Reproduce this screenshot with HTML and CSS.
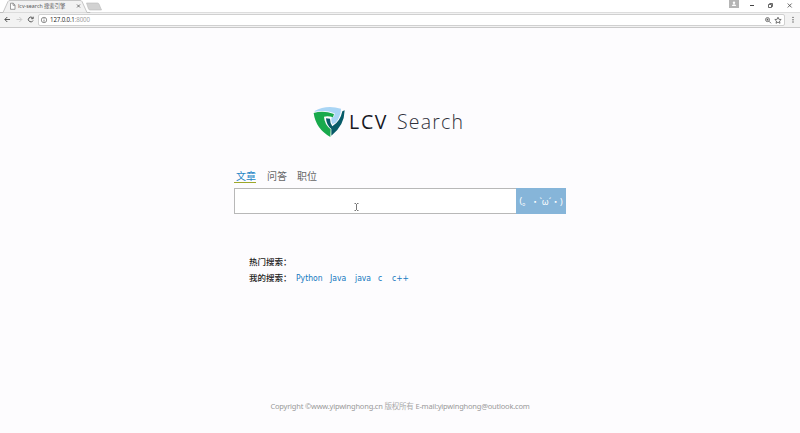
FILE: index.html
```html
<!DOCTYPE html>
<html lang="zh-CN">
<head>
<meta charset="utf-8">
<title>lcv-search 搜索引擎</title>
<link rel="stylesheet" href="styles.css">
</head>
<body>
<header class="browser">
  <div class="tabstrip">
    <svg class="tab-shape" width="105" height="13" viewBox="0 0 105 13">
      <path d="M0 12.5H3L8 1.5Q8.500 .5 10 .5H80Q81.500 .5 82 1.500L87 12.500H90V13H0Z" fill="#f2f2f2" stroke="#b9b9b9" stroke-width=".8"/>
      <path d="M86.500 3H97.500Q98.500 3 99 4L101.500 10H90Q89 10 88.500 9Z" fill="#d2d2d2" stroke="#bbb" stroke-width=".6"/>
      <path d="M10.500 3.200H13.300L15 5V9.300H10.500ZM13 3.200V5.300H15" fill="#fff" stroke="#777" stroke-width=".7"/>
      <path d="M77 4.500L80 7.500M80 4.500L77 7.500" stroke="#555" stroke-width=".8"/>
    </svg>
    <span class="tab-title">lcv-search 搜索引擎</span>
    <svg class="window-buttons" width="72" height="13" viewBox="0 0 72 13">
      <rect x="1" y="0" width="10" height="8" fill="#b5b5b5"/>
      <circle cx="6" cy="2.700" r="1.200" fill="#fff"/><path d="M3.800 6Q4 4.300 6 4.300T8.200 6Z" fill="#fff"/>
      <path d="M22 5.500H26" stroke="#444"/>
      <path d="M40.500 4.500H43.500V7.500H40.500ZM41.700 4.300V3.500H44.500V6.500H43.600" fill="none" stroke="#444" stroke-width=".8"/>
      <path d="M59.700 3.500L63.700 7.500M63.700 3.500L59.700 7.500" stroke="#444" stroke-width=".8"/>
    </svg>
  </div>
  <div class="toolbar">
    <svg width="38" height="14" viewBox="0 0 38 14" fill="none">
      <path d="M10 6.500H5M7.300 4L4.800 6.500L7.300 9" stroke="#555"/>
      <path d="M16.500 6.500H21.500M19.300 4L21.800 6.500L19.300 9" stroke="#ccc"/>
      <path d="M32.700 5A2.400 2.400 0 1 0 33 7.500M33.200 3.700V5.700H31.200" stroke="#555"/>
    </svg>
    <div class="address">
      <svg width="10" height="10" viewBox="0 0 10 10"><circle cx="5" cy="5" r="2.700" fill="none" stroke="#666" stroke-width=".7"/><path d="M5 3.200V4M5 4.600V6.800" stroke="#666" stroke-width=".8"/></svg>
      <span class="url">127.0.0.1<span class="port">:8000</span></span>
      <svg class="address-actions" width="21" height="11" viewBox="0 0 21 11" fill="none" stroke="#555" stroke-width=".8">
        <circle cx="4.500" cy="4.600" r="2"/><path d="M6 6.200L8 8.300M3.500 4.600H5.500M4.500 3.600V5.600"/>
        <path d="M15 2.200L15.900 4.300L18.200 4.500L16.500 6L17 8.300L15 7.100L13 8.300L13.500 6L11.800 4.500L14.100 4.300Z"/>
      </svg>
    </div>
    <svg width="15" height="14" viewBox="0 0 15 14" fill="#555"><circle cx="8" cy="4.400" r=".7"/><circle cx="8" cy="6.700" r=".7"/><circle cx="8" cy="9" r=".7"/></svg>
  </div>
</header>
<main>
  <h1 class="brand">
    <svg width="32" height="32" viewBox="9 9 96 96">
      <path d="M14 24Q48 5 93 17Q92 42 77 59L67 64Q62 54 65 43L72 42L74 31Q46 20 14 26Z" fill="#a9d5f5"/>
      <path d="M11 30Q40 21 72 33L69 43Q55 38 42 41Q43 63 62 79L61 102Q17 77 11 30Z" fill="#18a94c"/>
      <path d="M48 46L60 47Q60 61 67 70Q91 55 97 25L104 22Q103 69 64 98V78Q49 66 48 46Z" fill="#075b68"/>
    </svg>
    <span class="brand-lcv">LCV</span><span class="brand-search">Search</span>
  </h1>
  <section class="search">
    <nav class="types"><a class="active">文章</a><a>问答</a><a>职位</a></nav>
    <div class="search-row">
      <div class="field"></div>
      <div class="submit"><span>(</span><span class="comma">。</span><span>・`ω´・)</span></div>
    </div>
  </section>
  <section class="history">
    <div class="history-row"><b>热门搜索：</b></div>
    <div class="history-row"><b>我的搜索：</b><a class="w1">Python</a><a class="w2">Java</a><a class="w3">java</a><a class="w4">c</a><a>c++</a></div>
  </section>
</main>
<footer>Copyright ©www.yipwinghong.cn <span class="rights">版权所有</span> E-mail:yipwinghong@outlook.com</footer>
<svg class="cursor" width="5" height="8" viewBox="0 0 5 8"><path d="M.5 .5H2M3 .5H4.500M2.500 1V7M.5 7.500H2M3 7.500H4.500" fill="none" stroke="#555" stroke-width=".8"/></svg>
</body>
</html>
```
FILE: styles.css
```css
* { box-sizing: border-box; }
body {
  margin: 0;
  height: 433px;
  overflow: hidden;
  display: flex;
  flex-direction: column;
  background: #fdfcfe;
  font-family: "Noto Sans", "Noto Sans CJK SC", sans-serif;
}
svg { display: block; flex: none; }
.browser { height: 28px; flex: none; background: #f2f2f2; border-bottom: 1px solid #c9c9c9; }
.tabstrip { height: 13px; display: flex; background: #fff; border-bottom: 1px solid #ddd; }
.tab-title { width: 60px; margin-left: -87px; font-size: 5.3px; line-height: 13px; color: #555; white-space: nowrap; }
.window-buttons { margin-left: auto; }
.toolbar { height: 14px; display: flex; }
.address {
  flex: 1;
  height: 12px;
  margin-top: 1px;
  display: flex;
  align-items: center;
  background: #fff;
  border: 1px solid #d0d0d0;
  border-radius: 2px;
}
.url { margin-left: 1px; font-family: "Open Sans", sans-serif; font-size: 6.2px; letter-spacing: -.15px; line-height: 10px; color: #222; }
.port { color: #999; }
.address-actions { margin-left: auto; }
main { flex: 1; }
.brand {
  display: flex;
  height: 32px;
  margin: 78px 0 0 313px;
  font-family: "Open Sans", sans-serif;
  font-size: 19.5px;
  line-height: 32px;
  color: #17181f;
}
.brand-lcv { width: 48px; margin-left: 4px; font-weight: 400; letter-spacing: 1.7px; }
.brand-search { font-weight: 300; letter-spacing: 1.2px; color: #30313a; }
.search { width: 332px; margin: 31px 0 0 234px; }
.types {
  display: flex;
  gap: 1px;
  height: 19px;
  font-family: "Noto Sans CJK SC", sans-serif;
  font-size: 10px;
  line-height: 14px;
  color: #666;
}
.types a { width: 29px; height: 14px; padding-left: 3px; }
.types .active { width: 22px; margin-right: 7px; padding-left: 2px; color: #2385c5; border-bottom: 1px solid #9ca72a; }
.search-row { display: flex; height: 26px; }
.field { flex: 1; background: #fff; border: 1px solid #b8b8b8; border-right: 0; }
.submit {
  width: 50px;
  display: flex;
  align-items: center;
  justify-content: center;
  background: #86b5d9;
  color: #fff;
  font-size: 8.7px;
  white-space: nowrap;
}
.history { margin: 39px 0 0 249px; }
.history-row {
  display: flex;
  height: 16px;
  font-family: "DejaVu Sans Condensed", "DejaVu Sans", sans-serif;
  font-stretch: condensed;
  font-size: 8.5px;
  line-height: 18px;
  color: #1479c0;
}
.history b { width: 47px; font-family: "Noto Sans CJK SC", sans-serif; font-size: 8.5px; line-height: 16px; font-weight: 500; color: #222; }
.w1 { width: 34px; }
.w2 { width: 25px; }
.w3 { width: 23px; }
.w4 { width: 14px; }
footer { height: 35px; text-align: center; font-size: 7.5px; letter-spacing: -.2px; line-height: 16px; color: #999; white-space: nowrap; }
.rights { color: #aaa; }
.cursor { position: absolute; left: 354px; top: 203px; }
```
